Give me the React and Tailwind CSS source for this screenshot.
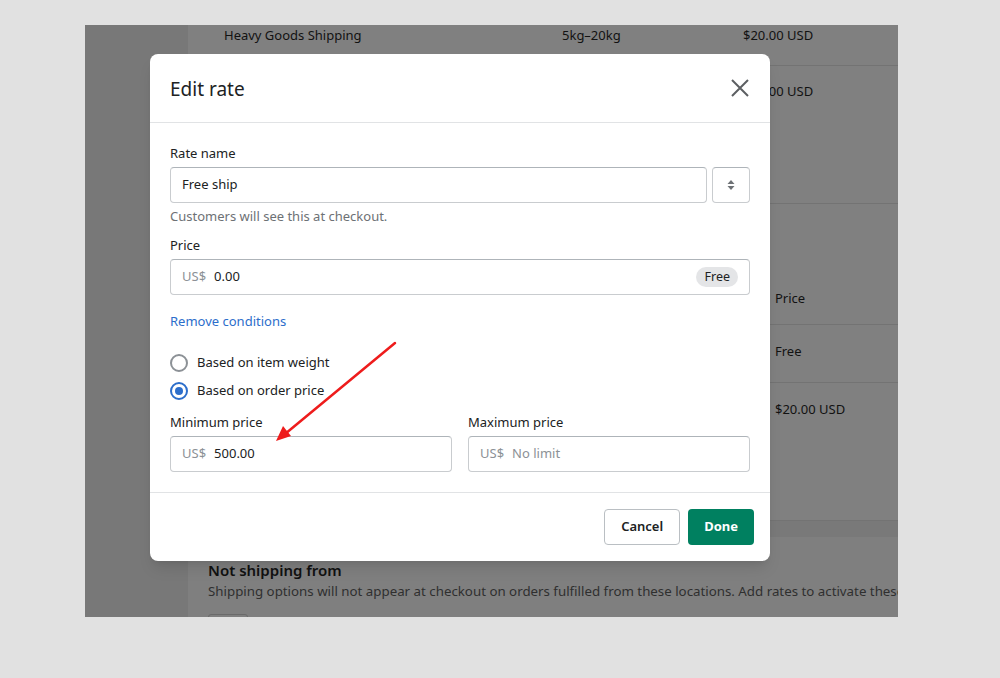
import React from "react";

const font = { fontFamily: '"Noto Sans", "Open Sans", sans-serif' };

function Input({ prefix, value, muted, badge }) {
  return (
    <div className="flex h-[36px] items-center rounded-[4px] border border-[#c9cccf] border-t-[#aeb4b9] bg-white px-[11px] text-[13px]">
      {prefix && <span className="mr-[8px] text-[#8c9196]">{prefix}</span>}
      <span className={muted ? "text-[#8c9196]" : "text-[#202223]"}>{value}</span>
      {badge && (
        <span className="ml-auto rounded-full bg-[#e4e5e7] px-[8px] py-[1px] text-[12.5px] text-[#202223]">
          {badge}
        </span>
      )}
    </div>
  );
}

function Radio({ checked, label }) {
  return (
    <div className="flex h-[28px] items-center gap-[9px]">
      <span
        className={
          checked
            ? "flex h-[18px] w-[18px] items-center justify-center rounded-full border-2 border-[#2c6ecb]"
            : "h-[18px] w-[18px] rounded-full border-2 border-[#8c9196]"
        }
      >
        {checked && <span className="h-[8px] w-[8px] rounded-full bg-[#2c6ecb]" />}
      </span>
      <span className="text-[13px] text-[#202223]">{label}</span>
    </div>
  );
}

export default function App() {
  return (
    <div className="h-[678px] w-[1000px] bg-[#e1e1e1] pt-[25px] pl-[85px]" style={font}>
      <div className="relative h-[592px] w-[813px] overflow-hidden">
        <div className="flex h-full">
          <div className="w-[103px] shrink-0 bg-[#787878]" />
          <div className="flex min-w-0 flex-1 flex-col overflow-hidden bg-[#797979]">
            <div className="h-[496px] bg-[#808080] text-[13px] text-[#121212]">
              <div className="flex h-[41px] border-b border-[#737373] pl-[36px] pt-[1px]">
                <span className="w-[338px] shrink-0">Heavy Goods Shipping</span>
                <span className="w-[181px] shrink-0">5kg–20kg</span>
                <span className="whitespace-nowrap">$20.00 USD</span>
              </div>
              <div className="flex h-[138px] border-b border-[#737373] pl-[555px] pt-[16px]">
                <span className="whitespace-nowrap">$20.00 USD</span>
              </div>
              <div className="flex h-[121px] flex-col justify-end border-b border-[#737373] pb-[16px] pl-[587px]">
                <span>Price</span>
              </div>
              <div className="flex h-[58px] border-b border-[#737373] pl-[587px] pt-[17px]">
                <span>Free</span>
              </div>
              <div className="flex h-[138px] border-b border-[#737373] pl-[587px] pt-[17px]">
                <span className="whitespace-nowrap">$20.00 USD</span>
              </div>
            </div>
            <div className="mt-[16px] flex-1 bg-[#7f7f7f] pl-[20px] pt-[22px]">
              <div className="text-[15px] font-semibold leading-[22px] text-[#111]">Not shipping from</div>
              <div className="whitespace-nowrap text-[13.3px] leading-[20px] text-[#2f2f2f]">
                Shipping options will not appear at checkout on orders fulfilled from these locations. Add rates to activate these
              </div>
              <div className="mt-[13px] h-[10px] w-[40px] rounded-t-[3px] border border-[#6a6a6a]" />
            </div>
          </div>
        </div>

        {/* Modal */}
        <div className="absolute left-[65px] top-[29px] w-[620px] rounded-[8px] bg-white shadow-lg">
          <div className="flex h-[69px] items-center justify-between border-b border-[#e1e3e5] pl-[20px] pr-[21px] pt-[2px]">
            <span className="text-[19px] text-[#202223]">Edit rate</span>
            <svg width="18" height="18" viewBox="0 0 18 18" className="mb-[2px] text-[#5c5f62]">
              <path d="M1 1 L17 17 M17 1 L1 17" stroke="currentColor" strokeWidth="2" />
            </svg>
          </div>
          <div className="px-[20px] pb-[20px] pt-[20px] text-[13px]">
            <div className="leading-[20px] text-[#202223]">Rate name</div>
            <div className="mt-[4px] flex gap-[5px]">
              <div className="flex-1">
                <Input value="Free ship" />
              </div>
              <div className="flex h-[36px] w-[38px] items-center justify-center rounded-[4px] border border-[#c9cccf] border-t-[#aeb4b9]">
                <svg width="8" height="12" viewBox="0 0 8 12">
                  <path d="M4 1 L7.5 5 H0.5 Z M4 11 L7.5 7 H0.5 Z" fill="#6d7175" />
                </svg>
              </div>
            </div>
            <div className="mt-[3px] leading-[20px] text-[#6d7175]">Customers will see this at checkout.</div>
            <div className="mt-[9px] leading-[20px] text-[#202223]">Price</div>
            <div className="mt-[4px]">
              <Input prefix="US$" value="0.00" badge="Free" />
            </div>
            <div className="mt-[16px] leading-[20px] text-[#2c6ecb]">Remove conditions</div>
            <div className="mt-[18px]">
              <Radio label="Based on item weight" />
              <Radio checked label="Based on order price" />
            </div>
            <div className="mt-[7px] grid grid-cols-2 gap-[16px]">
              <div>
                <div className="leading-[20px] text-[#202223]">Minimum price</div>
                <div className="mt-[4px]">
                  <Input prefix="US$" value="500.00" />
                </div>
              </div>
              <div>
                <div className="leading-[20px] text-[#202223]">Maximum price</div>
                <div className="mt-[4px]">
                  <Input prefix="US$" value="No limit" muted />
                </div>
              </div>
            </div>
          </div>
          <div className="flex h-[69px] items-center justify-end gap-[8px] border-t border-[#e1e3e5] pr-[16px]">
            <button className="h-[36px] rounded-[4px] border border-[#babfc3] bg-white px-[16px] text-[13px] font-semibold text-[#202223]">
              Cancel
            </button>
            <button className="h-[36px] rounded-[4px] bg-[#008060] px-[16px] text-[13px] font-bold text-white">
              Done
            </button>
          </div>
        </div>

        {/* Annotation arrow */}
        <svg className="absolute left-0 top-0" width="813" height="592" viewBox="0 0 813 592">
          <line x1="310" y1="318" x2="200" y2="409" stroke="#ee1c1c" strokeWidth="2.5" strokeLinecap="round" />
          <path d="M191 416 L198 401 L206 411 Z" fill="#ee1c1c" />
        </svg>
      </div>
    </div>
  );
}
